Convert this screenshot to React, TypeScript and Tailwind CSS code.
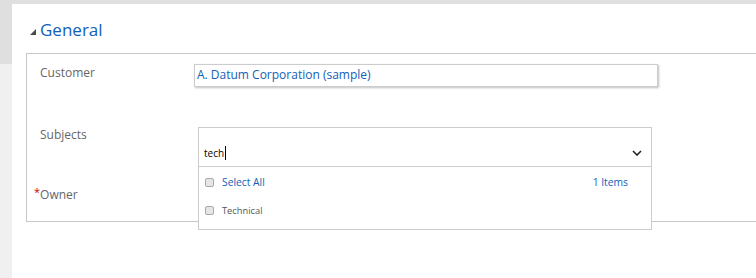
import React from "react";

const font = { fontFamily: '"Segoe UI", "Open Sans", "Noto Sans", sans-serif' };

function Checkbox() {
  return (
    <span className="inline-block w-[9px] h-[9px] rounded-[2px] border border-[#a9a9a9] bg-[#e6e6e6] shrink-0" />
  );
}

export default function App() {
  return (
    <div className="w-[756px] h-[278px] flex flex-col bg-[#dfdfdf] overflow-hidden" style={font}>
      <div className="h-[4px] shrink-0" />
      <div className="flex flex-1 min-h-0">
        <div className="w-[12px] flex flex-col shrink-0">
          <div className="h-[60px] bg-[#dfdfdf]" />
          <div className="flex-1 bg-[#f0f0f0]" />
        </div>
        <div className="flex-1 bg-white flex flex-col">
          {/* header */}
          <div className="h-[49px] flex items-center pl-[18px] pt-[2px]">
            <svg width="6" height="6" viewBox="0 0 6 6" className="mt-[4px] mr-[4px]">
              <polygon points="6,0 6,6 0,6" fill="#4a4a4a" />
            </svg>
            <span className="text-[17px] text-[#1160b7] leading-none">General</span>
          </div>
          {/* section box */}
          <div className="ml-[14px] h-[169px] border-l border-t border-b border-[#c4c8c8] relative">
            {/* Customer row */}
            <div className="flex pt-[10px]">
              <div className="w-[167px] pl-[13px] text-[12px] text-[#666] leading-[18px]">Customer</div>
              <div className="w-[464px] h-[23px] border border-[#ccc] shadow-[1px_1px_2px_rgba(0,0,0,0.25)] pl-[2px] text-[12px] text-[#1160b7] leading-[19px]">
                A. Datum Corporation (sample)
              </div>
            </div>
            {/* Subjects row */}
            <div className="flex pt-[40px]">
              <div className="w-[171px] pl-[13px] text-[12px] text-[#666] leading-[18px] -mt-[1px]">Subjects</div>
              <div className="w-[454px] h-[40px] border border-[#ccc] flex items-end pb-[6px] pl-[5px] pr-[9px] relative">
                <span className="text-[10px] text-black leading-[14px] flex items-center">
                  tech<span className="inline-block w-[1px] h-[14px] bg-black ml-[1px]" />
                </span>
                <svg className="ml-auto mb-[4px]" width="10" height="6" viewBox="0 0 10 6">
                  <polyline points="1,1 5,5 9,1" fill="none" stroke="#222" strokeWidth="1.6" />
                </svg>
              </div>
            </div>
            {/* Owner row */}
            <div className="flex items-start pt-[19px] pl-[7px] text-[12px] leading-[18px]">
              <span className="text-[#c00] text-[11px] leading-[10px] mt-[1px]">*</span>
              <span className="text-[#666]">Owner</span>
            </div>
            {/* dropdown */}
            <div className="absolute left-[171px] top-[113px] w-[454px] h-[63px] bg-white border border-t-0 border-[#ccc] flex flex-col px-[6px]">
              <div className="flex items-center h-[30px] pt-[1px]">
                <Checkbox />
                <span className="ml-[8px] text-[10.3px] text-[#1160b7]">Select All</span>
                <span className="ml-auto mr-[17px] text-[10.3px] text-[#1160b7]">1 Items</span>
              </div>
              <div className="flex items-center h-[27px]">
                <Checkbox />
                <span className="ml-[8px] text-[9.3px] text-[#555]">Technical</span>
              </div>
            </div>
          </div>
        </div>
      </div>
    </div>
  );
}
